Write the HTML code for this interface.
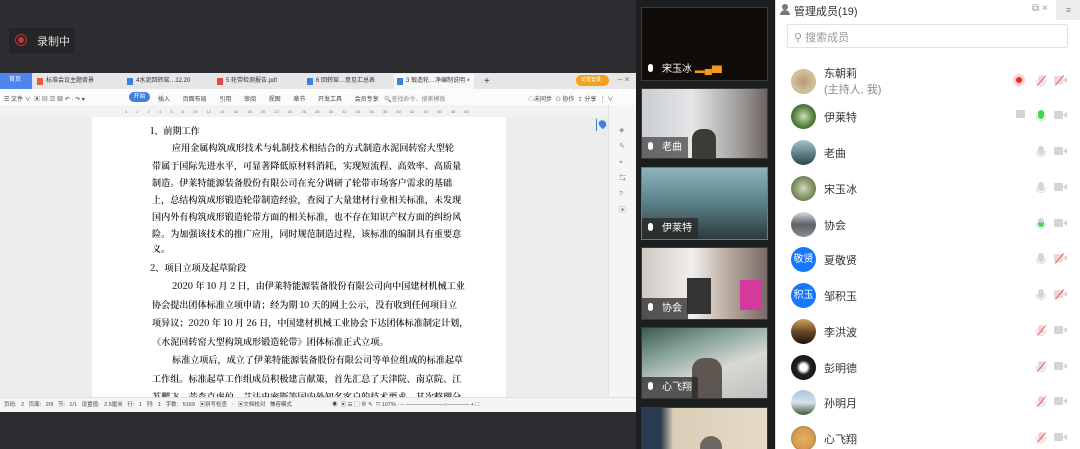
<!DOCTYPE html>
<html><head><meta charset="utf-8"><style>
*{margin:0;padding:0;box-sizing:border-box}
html,body{width:1080px;height:449px;overflow:hidden}
body{position:relative;background:#2b2d30;font-family:"Liberation Sans","Noto Sans CJK SC",sans-serif}
.a{position:absolute}
.rec{left:9px;top:28px;width:65px;height:25px;background:#242527;border-radius:2px;color:#ddd;font-size:11px}
.win{left:0;top:73px;width:636px;height:339px;background:#f3f3f3;overflow:hidden}
.tabs{left:0;top:0;width:636px;height:16px;background:#e6e6e6;font-size:6px;color:#333}
.tab{position:absolute;top:1px;height:15px;line-height:15px;padding-left:12px;white-space:nowrap}
.tab i{position:absolute;left:3px;top:4px;width:6px;height:7px}
.tb{left:0;top:16px;width:636px;height:16px;background:#fbfbfb;font-size:6px;color:#444}
.ruler{left:0;top:32px;width:608px;height:12px;background:#f2f2f2;font-size:4px;color:#777}
.page{left:92px;top:44px;width:414px;height:280px;background:#fff}
.txt{position:absolute;left:152px;font-family:"Noto Serif CJK SC","Liberation Serif",serif;font-size:9.1px;color:#1a1a1a;white-space:nowrap;letter-spacing:0;font-weight:600}
.side{left:608px;top:32px;width:28px;height:292px;background:#f5f5f5;border-left:1px solid #e4e4e4}
.mid{left:636px;top:0;width:139px;height:449px;background:#1c1d1f}
.tile{position:absolute;left:641px;width:127px;border:1px solid #3a3a3a;overflow:hidden}
.lab{position:absolute;left:0;bottom:0;height:21px;padding:0 6px 0 20px;background:rgba(40,40,40,.75);color:#fff;font-size:10px;line-height:21px}
.lab:before{content:"";position:absolute;left:6px;top:5px;width:5px;height:8px;border-radius:3px;background:#fff}
.panel{left:775px;top:0;width:305px;height:449px;background:#fff;border-left:1px solid #ddd;overflow:hidden}
.row{position:absolute;left:0;width:300px;height:36px}
.av{position:absolute;left:15px;top:6px;width:25px;height:25px;border-radius:50%}
.nm{position:absolute;left:48px;top:11px;font-size:11px;color:#333}
.mic{position:absolute;left:262px;top:12px;width:6px;height:9px;border-radius:3px;background:#d4d4d4}
.mic:after{content:"";position:absolute;left:-2px;top:5px;width:8px;height:5px;border:1px solid #d4d4d4;border-top:none;border-radius:0 0 5px 5px}
.cam{position:absolute;left:278px;top:13px;width:9px;height:8px;background:#d4d4d4;border-radius:1px}
.cam:after{content:"";position:absolute;left:9px;top:1px;border:3px solid transparent;border-right:4px solid #d4d4d4;border-left:none}
.sl{position:absolute;width:1px;height:13px;background:#ee5a5a;transform:rotate(40deg)}
</style></head><body>
<div class="a rec"><div class="a" style="left:6px;top:6px;width:12px;height:12px;border:1px solid #b33;border-radius:50%"><div class="a" style="left:2px;top:2px;width:6px;height:6px;border-radius:50%;background:#c33"></div></div><span class="a" style="left:28px;top:5px">录制中</span></div>

<div class="a win">
 <div class="a tabs">
  <div class="tab" style="left:0;width:32px;background:#4f86ee;color:#fff;padding-left:9px;top:0;height:16px">首页</div>
  <div class="tab" style="left:34px;width:88px"><i style="background:#e5603f"></i>标准会议主题背景</div>
  <div class="tab" style="left:124px;width:88px"><i style="background:#3e7fe0"></i>4水泥回转窑…12.20</div>
  <div class="tab" style="left:214px;width:88px"><i style="background:#e24848"></i>5 轮带检测报告.pdf</div>
  <div class="tab" style="left:304px;width:88px"><i style="background:#3e7fe0"></i>6 回转窑…意见汇总表</div>
  <div class="tab" style="left:394px;width:80px;background:#f7f7f7"><i style="background:#3e7fe0"></i>3 锻造轮…净编制说明 ×</div>
  <div class="tab" style="left:484px;font-size:10px;padding:0">+</div>
  <div class="a" style="left:576px;top:2px;width:33px;height:11px;background:#f2a21c;border-radius:6px;color:#fff;font-size:5px;line-height:11px;padding-left:5px">访客登录</div>
  <div class="a" style="left:618px;top:2px;font-size:8px;color:#666">– ×</div>
 </div>
 <div class="a tb"><span class="a" style="left:4px;top:5px">☰ 文件 ∨ &nbsp;▣ ▤ ▥ ▦ ↶ · ↷ ▾</span>
  <div class="a" style="left:129px;top:3px;width:21px;height:10px;border-radius:5px;background:#3e7fe0;color:#fff;text-align:center;line-height:10px">开始</div>
  <span class="a" style="left:158px;top:5px;word-spacing:11px">插入 页面布局 引用 审阅 视图 章节 开发工具 会员专享</span>
  <span class="a" style="left:384px;top:5px;color:#888">🔍查找命令、搜索模板</span>
  <span class="a" style="left:528px;top:5px">☁未同步 &nbsp;⚇ 协作 &nbsp;⇪ 分享 &nbsp;⋮ ∨</span>
 </div>
 <div class="a ruler"><span class="a" style="left:125px;top:4px;word-spacing:8px">4 2 2 4 6 8 10 12 14 16 18 20 22 24 26 28 30 32 34 36 38 40 42 44 46 48 50</span></div>
 <div class="a" style="left:0;top:44px;width:608px;height:280px;background:#ececec"></div>
 <div class="a page"></div>
 <div class="a side"><div class="a" style="left:-13px;top:14px;width:1px;height:12px;background:#3e7fe0"></div><div class="a" style="left:-10px;top:15px;width:7px;height:8px;border-radius:50% 50% 50% 0;background:#3e7fe0;transform:rotate(-45deg)"></div>
 <div class="a" style="left:10px;top:18px;font-size:7px;color:#888;line-height:16px">◈<br>✎<br>⌖<br>⇆<br>?<br>▣</div></div>
</div>

<div class="txt" style="top:124px;left:150px">1、前期工作</div>
<div class="txt" style="top:141px;left:172px">应用金属构筑成形技术与轧制技术相结合的方式制造水泥回转窑大型轮</div>
<div class="txt" style="top:159px">带属于国际先进水平，可显著降低原材料消耗，实现短流程、高效率、高质量</div>
<div class="txt" style="top:176px">制造。伊莱特能源装备股份有限公司在充分调研了轮带市场客户需求的基础</div>
<div class="txt" style="top:193px">上，总结构筑成形锻造轮带制造经验，查阅了大量建材行业相关标准，未发现</div>
<div class="txt" style="top:210px">国内外有构筑成形锻造轮带方面的相关标准，也不存在知识产权方面的纠纷风</div>
<div class="txt" style="top:227px">险。为加强该技术的推广应用，同时规范制造过程，该标准的编制具有重要意</div>
<div class="txt" style="top:242px">义。</div>
<div class="txt" style="top:261px;left:150px">2、项目立项及起草阶段</div>
<div class="txt" style="top:279px;left:172px">2020 年 10 月 2 日，由伊莱特能源装备股份有限公司向中国建材机械工业</div>
<div class="txt" style="top:298px">协会提出团体标准立项申请；经为期 10 天的网上公示，没有收到任何项目立</div>
<div class="txt" style="top:316px">项异议；2020 年 10 月 26 日，中国建材机械工业协会下达团体标准制定计划，</div>
<div class="txt" style="top:335px">《水泥回转窑大型构筑成形锻造轮带》团体标准正式立项。</div>
<div class="txt" style="top:353px;left:172px">标准立项后，成立了伊莱特能源装备股份有限公司等单位组成的标准起草</div>
<div class="txt" style="top:372px">工作组。标准起草工作组成员积极建言献策，首先汇总了天津院、南京院、江</div>
<div class="txt" style="top:390px;height:7px;overflow:hidden">苏鹏飞、蒂森克虏伯、艾法史密斯等国内外知名客户的技术要求，其次整理分</div>
<div class="a" style="left:0;top:397px;width:636px;height:15px;background:#f5f5f5;font-size:5.5px;color:#444;line-height:15px;border-top:1px solid #e0e0e0"><span class="a" style="left:4px;word-spacing:3px">页码: 2 页面: 2/9 节: 1/1 设置值: 2.5厘米 行: 1 列: 1 字数: 5169 ▣拼写检查 · ▣文档校对 兼容模式</span><span class="a" style="left:332px">◉ &nbsp;▣ ☰ ▢ ⊕ ✎ &nbsp;⤧ 107% · – ———————○———— + ⛶</span></div>

<div class="a mid"></div>
<div class="tile" style="top:7px;height:74px;background:#100c0a"><div class="lab" style="background:none">宋玉冰 <span style="color:#f39a1c">▂▄▆</span></div></div>
<div class="tile" style="top:88px;height:71px;background:linear-gradient(90deg,#c9ccd0,#e4e6e8 40%,#9a9896 80%,#6c6260)"><div class="a" style="left:50px;top:40px;width:24px;height:30px;border-radius:10px 10px 0 0;background:#3d3b36"></div><div class="lab" style="background:rgba(60,60,60,.7)">老曲</div></div>
<div class="tile" style="top:167px;height:73px;border:1px solid #2aa84a;background:linear-gradient(180deg,#8cb4bd,#5a7f86 50%,#2e3a3c)"><div class="lab">伊莱特</div></div>
<div class="tile" style="top:247px;height:73px;background:linear-gradient(90deg,#cfc9c2,#f1eeeb 40%,#b7a89c 70%,#7a6a68)"><div class="a" style="left:98px;top:32px;width:22px;height:30px;background:#d43a9c"></div><div class="a" style="left:45px;top:30px;width:24px;height:36px;background:#333"></div><div class="lab">协会</div></div>
<div class="tile" style="top:327px;height:72px;background:linear-gradient(160deg,#3e5a50,#86a29a 30%,#d8d9d4 60%,#bcc0bc)"><div class="a" style="left:50px;top:30px;width:30px;height:42px;border-radius:12px 12px 0 0;background:#5d5651"></div><div class="lab">心飞翔</div></div>
<div class="tile" style="top:407px;height:42px;border-bottom:none;background:linear-gradient(90deg,#2a3a50 15%,#d9cdb6 25%,#e7dcc6)"><div class="a" style="left:58px;top:28px;width:22px;height:22px;border-radius:50%;background:#6d6864"></div></div>

<div class="a panel">
 <div class="a" style="left:6px;top:4px;width:6px;height:6px;border-radius:50%;background:#777"></div><div class="a" style="left:4px;top:10px;width:10px;height:5px;border-radius:5px 5px 0 0;background:#777"></div>
 <div class="a" style="left:18px;top:3px;font-size:11px;color:#333">管理成员(19)</div>
 <div class="a" style="left:256px;top:3px;font-size:10px;color:#999">⧉ ×</div>
 <div class="a" style="left:280px;top:0;width:25px;height:20px;background:#ececec;color:#888;font-size:9px;text-align:center;line-height:20px">≡</div>
 <div class="a" style="left:11px;top:24px;width:281px;height:24px;border:1px solid #e2e2e2;border-radius:2px"><span class="a" style="left:6px;top:4px;font-size:11px;color:#999">⚲ 搜索成员</span></div>
 <div class="row" style="top:63px"><div class="av" style="background:radial-gradient(#b99770,#cfc39b 60%,#a9a27a)"></div><div class="nm" style="top:3px;line-height:16px">东朝莉<br><span style="color:#888">(主持人, 我)</span></div>
  <div class="a" style="left:237px;top:11px;width:12px;height:12px;border-radius:50%;background:#fbd0d0"><div class="a" style="left:3px;top:3px;width:6px;height:6px;border-radius:50%;background:#f02a2a"></div></div>
  <div class="mic" style="background:#f4d6d6"></div><div class="sl" style="left:265px;top:11px"></div><div class="cam" style="background:#f4d6d6"></div><div class="sl" style="left:283px;top:11px"></div></div>
 <div class="row" style="top:98px"><div class="av" style="background:radial-gradient(#c8e0b0,#4e7a3a 60%,#2d4c23)"></div><div class="nm">伊莱特</div><div class="a" style="left:240px;top:12px;width:9px;height:8px;background:#d4d4d4"></div><div class="mic" style="background:#3fd94b"></div><div class="cam"></div></div>
 <div class="row" style="top:134px"><div class="av" style="background:linear-gradient(#a9c3c9,#587a82 60%,#2e4548)"></div><div class="nm">老曲</div><div class="mic"></div><div class="cam"></div></div>
 <div class="row" style="top:170px"><div class="av" style="background:radial-gradient(#d0d8c0,#7a8c5c 60%,#54603e)"></div><div class="nm">宋玉冰</div><div class="mic"></div><div class="cam"></div></div>
 <div class="row" style="top:206px"><div class="av" style="background:linear-gradient(#d8dde2,#5d6066 50%,#8a8f95)"></div><div class="nm">协会</div><div class="mic" style="background:linear-gradient(#d4d4d4 50%,#3fd94b 50%)"></div><div class="cam"></div></div>
 <div class="row" style="top:241px"><div class="av" style="background:#1677ff;color:#fff;font-size:10px;text-align:center;line-height:25px">敬贤</div><div class="nm">夏敬贤</div><div class="mic"></div><div class="cam" style="background:#f0d4d4"></div><div class="sl" style="left:283px;top:11px"></div></div>
 <div class="row" style="top:277px"><div class="av" style="background:#1677ff;color:#fff;font-size:10px;text-align:center;line-height:25px">积玉</div><div class="nm">邹积玉</div><div class="mic"></div><div class="cam" style="background:#f0d4d4"></div><div class="sl" style="left:283px;top:11px"></div></div>
 <div class="row" style="top:313px"><div class="av" style="background:linear-gradient(#d0a060,#6a4a2a 50%,#1a1410)"></div><div class="nm">李洪波</div><div class="mic" style="background:#f0d4d4"></div><div class="sl" style="left:265px;top:11px"></div><div class="cam"></div></div>
 <div class="row" style="top:349px"><div class="av" style="background:radial-gradient(#fff 20%,#222 40%,#0a0a0a)"></div><div class="nm">彭明德</div><div class="mic" style="background:#f0d4d4"></div><div class="sl" style="left:265px;top:11px"></div><div class="cam"></div></div>
 <div class="row" style="top:384px"><div class="av" style="background:linear-gradient(#a8c4de,#d6e2ea 50%,#3f5a3a)"></div><div class="nm">孙明月</div><div class="mic" style="background:#f0d4d4"></div><div class="sl" style="left:265px;top:11px"></div><div class="cam"></div></div>
 <div class="row" style="top:420px"><div class="av" style="background:radial-gradient(#e8b060,#d49a50 60%,#3a2a1a)"></div><div class="nm">心飞翔</div><div class="mic" style="background:#f0d4d4"></div><div class="sl" style="left:265px;top:11px"></div><div class="cam"></div></div>
</div>
</body></html>
